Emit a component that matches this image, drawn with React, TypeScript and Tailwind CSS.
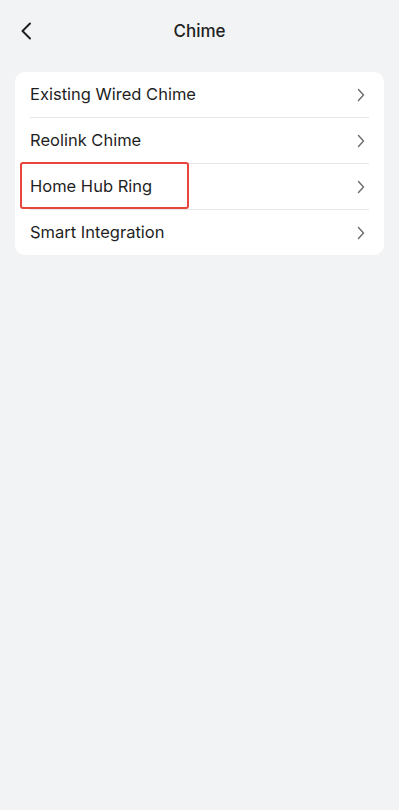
const items = ['Existing Wired Chime', 'Reolink Chime', 'Home Hub Ring', 'Smart Integration'];

function Chevron() {
  return (
    <svg width="8" height="14" viewBox="0 0 8 14" fill="none" className="shrink-0">
      <path d="M1.5 1.5 L6.5 7 L1.5 12.5" stroke="#6b6b70" strokeWidth="1.4" strokeLinecap="round" strokeLinejoin="round" />
    </svg>
  );
}

export default function App() {
  return (
    <div className="min-h-[810px] w-[399px] bg-[#f2f3f5] font-['Inter',sans-serif] text-[#1f1f1f]">
      <header className="relative flex h-[64px] items-center justify-center">
        <button className="absolute left-[20px] top-[22px]">
          <svg width="12" height="18" viewBox="0 0 12 18" fill="none">
            <path d="M10 1.5 L2.5 9 L10 16.5" stroke="#1f1f1f" strokeWidth="2" strokeLinecap="round" strokeLinejoin="round" />
          </svg>
        </button>
        <h1 className="text-[17px] font-medium">Chime</h1>
      </header>

      <div className="mx-[15px] mt-[8px] rounded-[10px] bg-white">
        {items.map((label, i) => (
          <div key={label} className="relative">
            {i > 0 && <div className="mx-[15px] h-px bg-[#e6e6e9]" />}
            <div className="flex h-[45px] items-center justify-between pl-[15px] pr-[19px]">
              <span className="text-[16.5px]">{label}</span>
              <Chevron />
            </div>
            {label === 'Home Hub Ring' && (
              <div className="absolute left-[5px] top-[-1px] h-[47px] w-[169px] rounded-[3px] border-2 border-[#e8453c]" />
            )}
          </div>
        ))}
      </div>
    </div>
  );
}
